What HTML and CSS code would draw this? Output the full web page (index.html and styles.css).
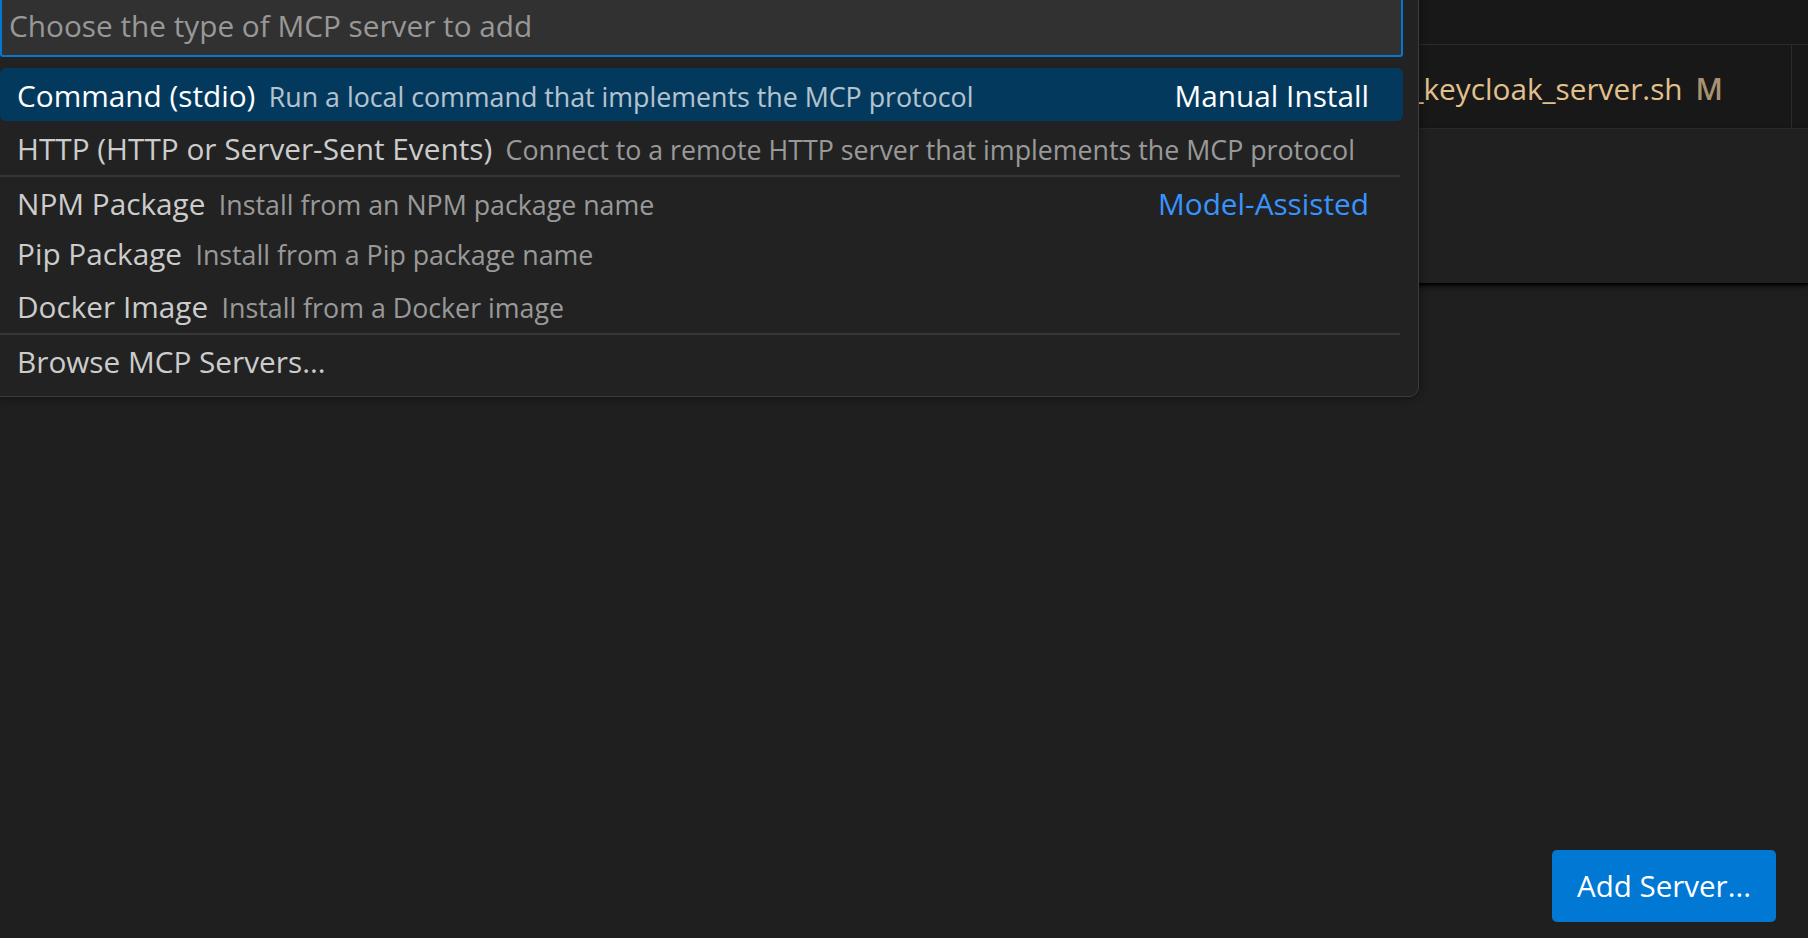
FILE: index.html
```html
<!DOCTYPE html>
<html lang="en">
<head>
<meta charset="utf-8">
<title>Add MCP Server</title>
<link rel="stylesheet" href="styles.css">
</head>
<body>
<div class="app">
  <div class="title-strip"></div>
  <div class="tab-row">
    <div class="tab">
      <span class="tab-name">start_keycloak_server.sh</span>
      <span class="tab-badge">M</span>
    </div>
    <div class="tab-filler"></div>
  </div>
  <div class="editor-top"></div>
  <div class="main">
    <button class="primary-btn">Add Server...</button>
  </div>
</div>

<div class="quick-pick">
  <div class="qp-input">Choose the type of MCP server to add</div>
  <div class="qp-list">
    <div class="qp-row focused">
      <span class="qp-text"><span class="qp-label">Command (stdio)</span><span class="qp-desc">Run a local command that implements the MCP protocol</span></span>
      <span class="qp-group">Manual Install</span>
    </div>
    <div class="qp-row">
      <span class="qp-text"><span class="qp-label">HTTP (HTTP or Server-Sent Events)</span><span class="qp-desc">Connect to a remote HTTP server that implements the MCP protocol</span></span>
    </div>
    <div class="qp-row sep">
      <span class="qp-text"><span class="qp-label">NPM Package</span><span class="qp-desc">Install from an NPM package name</span></span>
      <span class="qp-group link">Model-Assisted</span>
    </div>
    <div class="qp-row">
      <span class="qp-text"><span class="qp-label">Pip Package</span><span class="qp-desc">Install from a Pip package name</span></span>
    </div>
    <div class="qp-row">
      <span class="qp-text"><span class="qp-label">Docker Image</span><span class="qp-desc">Install from a Docker image</span></span>
    </div>
    <div class="qp-row sep">
      <span class="qp-text"><span class="qp-label">Browse MCP Servers...</span></span>
    </div>
  </div>
</div>
</body>
</html>
```
FILE: styles.css
```css
* { box-sizing: border-box; }

html, body {
  margin: 0;
  padding: 0;
  width: 1808px;
  height: 938px;
  overflow: hidden;
  background: #1f1f1f;
  font-family: "Open Sans", "Noto Sans", sans-serif;
  font-size: 29.75px;
}

body { position: relative; }

.app {
  display: flex;
  flex-direction: column;
  height: 938px;
}

.title-strip {
  height: 45px;
  background: #181818;
  border-bottom: 1px solid #2b2b2b;
  flex: none;
}

.tab-row {
  height: 84px;
  background: #181818;
  border-bottom: 1px solid #2b2b2b;
  display: flex;
  justify-content: flex-end;
  flex: none;
}

.tab {
  display: flex;
  align-items: center;
  padding: 3px 68px 0 0;
  border-right: 1px solid #2b2b2b;
  white-space: nowrap;
}

.tab-name { color: #e2c08d; }

.tab-badge {
  color: #a89271;
  font-weight: 600;
  margin-left: 13px;
}

.tab-filler { width: 16px; }

.editor-top {
  height: 154px;
  background: #202020;
  flex: none;
  box-shadow: 0 2px 2px #000, 0 4px 6px rgba(0,0,0,0.5);
  position: relative;
  z-index: 1;
}

.main {
  flex: 1;
  display: flex;
  justify-content: flex-end;
  align-items: flex-end;
  padding: 0 32px 16px 0;
}

.primary-btn {
  width: 224px;
  height: 72px;
  background: #0078d4;
  color: #ffffff;
  border: none;
  border-radius: 5px;
  font-family: inherit;
  font-size: 29.5px;
  padding: 0 0 1px 0;
}

/* Quick pick overlay */
.quick-pick {
  position: absolute;
  left: -16px;
  top: -19px;
  width: 1435px;
  background: #222222;
  border: 1px solid #3c3c3c;
  border-radius: 10px;
  padding: 14px 15px 11px 15px;
  box-shadow: 0 0 10px rgba(0,0,0,0.45);
  z-index: 5;
}

.qp-input {
  height: 61px;
  background: #313131;
  border: 2px solid #0078d4;
  border-radius: 3px;
  color: #989898;
  display: flex;
  align-items: center;
  padding: 0 0 2px 7px;
  white-space: nowrap;
}

.qp-list {
  margin-top: 11px;
  display: flex;
  flex-direction: column;
}

.qp-row {
  position: relative;
  height: 52.8px;
  display: flex;
  align-items: center;
  padding: 2px 34px 0 17px;
  white-space: nowrap;
  border-radius: 6px;
}

.qp-row.sep { padding-top: 7px; }

.qp-row.sep::before {
  content: "";
  position: absolute;
  left: 0;
  right: 3px;
  top: 1px;
  height: 2px;
  background: #363636;
}

.qp-text { flex: 1; }

.qp-label { color: #cccccc; }

.qp-desc {
  color: #cccccc;
  opacity: 0.7;
  font-size: 0.9em;
  margin-left: 0.5em;
}

.qp-group { color: #cccccc; }
.qp-group.link { color: #3794ff; }

.qp-row.focused { background: #04395e; }
.qp-row.focused .qp-label,
.qp-row.focused .qp-desc,
.qp-row.focused .qp-group { color: #ffffff; }
```
